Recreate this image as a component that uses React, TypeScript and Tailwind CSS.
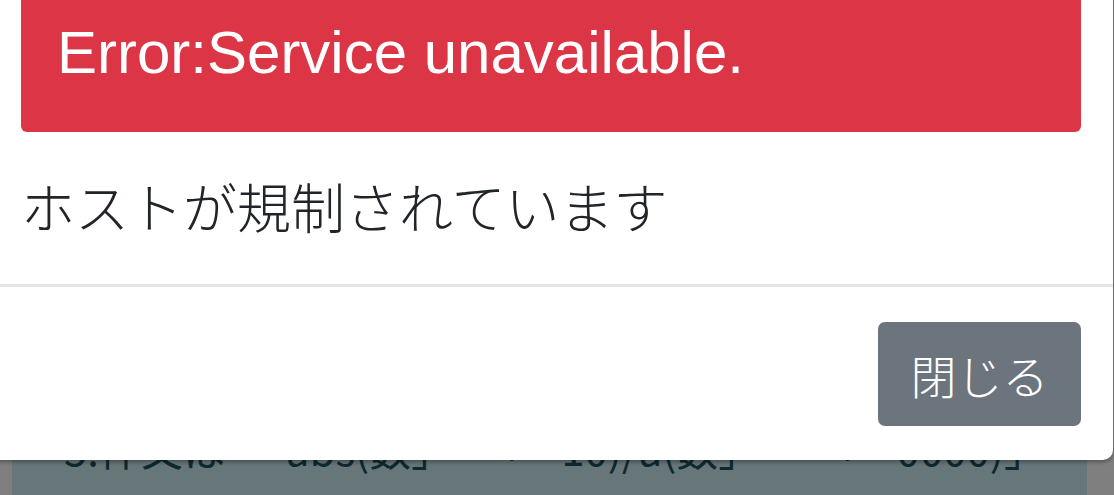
import React from 'react'

const jp = { fontFamily: '"Noto Sans CJK JP", "Noto Sans", sans-serif' }
const latin = { fontFamily: '"Liberation Sans", "Noto Sans CJK JP", sans-serif' }

export default function App() {
  return (
    <div className="relative h-[495px] w-[1114px] overflow-hidden bg-[#7f7f7f]">
      {/* page behind the backdrop */}
      <div className="ml-[12px] mr-[27px] flex h-full flex-col justify-end bg-[#677679]">
        <div
          className="mb-[26px] whitespace-pre pl-[52px] text-[42px] leading-none text-[#0d2a2e]"
          style={jp}
        >
          {'5.件文は「  abs(数」     +    10)/a(数」        +    0000)」'}
        </div>
      </div>

      {/* modal */}
      <div className="absolute left-[-11px] top-[-20px] w-[1124px] rounded-b-[10px] bg-white shadow-[0_2px_4px_rgba(0,0,0,0.35)]">
        <div className="px-[32px]">
          <div
            className="rounded-b-[6px] bg-[#dc3545] pb-[49px] pl-[36px] pt-[43px] text-[60px] leading-none text-white"
            style={latin}
          >
            Error:Service unavailable.
          </div>
          <p className="mb-[51px] mt-[47px] text-[54px] font-light leading-none text-[#212529]" style={jp}>
            ホストが規制されています
          </p>
        </div>
        <div className="flex justify-end border-t-[3px] border-[#e2e5e9] px-[32px] pb-[34px] pt-[35px]">
          <button
            className="flex h-[104px] w-[203px] items-center justify-center rounded-[7px] bg-[#6c757d] text-[46px] font-light leading-none text-white"
            style={jp}
          >
            閉じる
          </button>
        </div>
      </div>
    </div>
  )
}
